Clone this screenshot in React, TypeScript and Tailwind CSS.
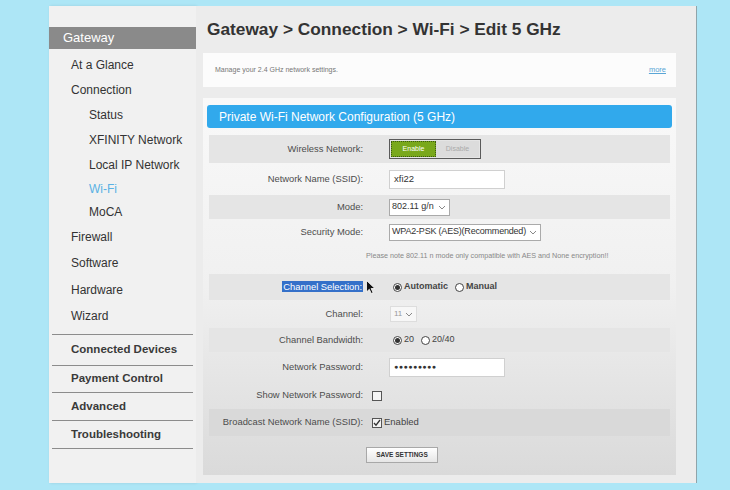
import React from 'react';

const sans = "font-['Liberation_Sans',Arial,sans-serif]";

const Chevron = () => (
  <svg width="8" height="5" viewBox="0 0 8 5" className="ml-auto mr-[3px] shrink-0">
    <path d="M1 1l3 3 3-3" fill="none" stroke="#888" strokeWidth="1" />
  </svg>
);

const Radio = ({ on }: { on?: boolean }) => (
  <span className="inline-flex h-[9px] w-[9px] items-center justify-center rounded-full border border-[#444] bg-white">
    {on && <span className="h-[5px] w-[5px] rounded-full bg-[#333]" />}
  </span>
);

const Check = ({ on }: { on?: boolean }) => (
  <span className="inline-flex h-[10px] w-[10px] items-center justify-center border border-[#555] bg-[#f4f4f4]">
    {on && (
      <svg width="8" height="8" viewBox="0 0 8 8">
        <path d="M1 4l2 2.2L7 1" fill="none" stroke="#333" strokeWidth="1.3" />
      </svg>
    )}
  </span>
);

const Label = ({ children }: { children: React.ReactNode }) => (
  <div className="w-[154px] shrink-0 text-right text-[9.4px] text-[#4d4d4d]">{children}</div>
);

const Cursor = () => (
  <svg width="9" height="14" viewBox="0 0 9 14" className="ml-[3px] shrink-0">
    <path d="M0.5 0.5v11.5l2.8-2.7 2 4.2 1.8-0.9-2-4.1h3.8z" fill="#111" stroke="#fff" strokeWidth="0.8" />
  </svg>
);

const App = () => {
  const navTop = [
    { t: 'At a Glance', h: 'h-[25px]', sub: false },
    { t: 'Connection', h: 'h-[25px]', sub: false },
    { t: 'Status', h: 'h-[25px]', sub: true },
    { t: 'XFINITY Network', h: 'h-[25px]', sub: true },
    { t: 'Local IP Network', h: 'h-[25px]', sub: true },
    { t: 'Wi-Fi', h: 'h-[23px]', sub: true, active: true },
    { t: 'MoCA', h: 'h-[24px]', sub: true },
    { t: 'Firewall', h: 'h-[25px]', sub: false },
    { t: 'Software', h: 'h-[27px]', sub: false },
    { t: 'Hardware', h: 'h-[27px]', sub: false },
    { t: 'Wizard', h: 'h-[26px]', sub: false },
  ];
  const navBold = [
    { t: 'Connected Devices', h: 'h-[31px]' },
    { t: 'Payment Control', h: 'h-[27px]' },
    { t: 'Advanced', h: 'h-[28px]' },
    { t: 'Troubleshooting', h: 'h-[28px]' },
  ];

  return (
    <div className={`min-h-[490px] w-[730px] bg-[#ade6f6] pl-[49px] pt-[6px] ${sans}`}>
      <div className="flex h-[477px] w-[648px]">
        {/* sidebar */}
        <aside className="w-[147px] shrink-0 bg-[#f1f1f1] pt-[21px] shadow-[1px_0_3px_rgba(0,0,0,0.1)]">
          <div className="flex h-[22px] items-center bg-[#8a8a8a] pl-[14px] text-[13px] text-white">Gateway</div>
          <div className="mt-[3px]">
            {navTop.map((n) => (
              <div
                key={n.t}
                className={`flex items-center ${n.h} ${n.sub ? 'pl-[40px]' : 'pl-[22px]'} text-[12px] ${
                  n.active ? 'text-[#5ab2e4]' : 'text-[#333]'
                }`}
              >
                {n.t}
              </div>
            ))}
          </div>
          <div className="mx-[3px] mt-[5px] border-t border-[#8c8c8c]">
            {navBold.map((n) => (
              <div
                key={n.t}
                className={`flex items-center ${n.h} border-b border-[#8c8c8c] pl-[19px] text-[11.5px] font-bold text-[#3a3a3a]`}
              >
                {n.t}
              </div>
            ))}
          </div>
        </aside>

        {/* content */}
        <main className="flex flex-1 flex-col border-r border-[#8fa4aa] bg-[#ececec] pl-[7px] pr-[20px]">
          <h1 className="mt-[13px] h-[20px] pl-[4px] text-[17.3px] font-bold leading-[20px] text-[#333]">
            Gateway &gt; Connection &gt; Wi-Fi &gt; Edit 5 GHz
          </h1>
          <div className="mt-[14px] flex h-[34px] items-center justify-between bg-[#fcfcfc] pl-[12px] pr-[10px] text-[7px]">
            <span className="text-[#777]">Manage your 2.4 GHz network settings.</span>
            <span className="text-[7.5px] text-[#5aa6d6] underline">more</span>
          </div>

          <section className="mt-[11px] h-[377px] bg-gradient-to-b from-[#f9f9f9] via-[#f0f0f0] to-[#dadada] px-[4px] pt-[7px]">
            <div className="flex h-[23px] items-center rounded-[3px] bg-[#31a9ec] pl-[12px] text-[12px] text-white">
              Private Wi-Fi Network Configuration (5 GHz)
            </div>

            <div className="mt-[7px] px-[2px]">
              <div className="flex h-[28px] items-center bg-[#e5e5e5]">
                <Label>Wireless Network:</Label>
                <div className="ml-[26px] flex h-[20px] border border-[#5a5a5a] p-[1px]">
                  <span className="flex w-[45px] items-center justify-center border border-dotted border-[#3d5a10] bg-[#79a81c] text-[7px] text-white">
                    Enable
                  </span>
                  <span className="flex w-[43px] items-center justify-center bg-[#dcdcdc] text-[7px] text-[#aaa]">
                    Disable
                  </span>
                </div>
              </div>

              <div className="flex h-[32px] items-center">
                <Label>Network Name (SSID):</Label>
                <div className="ml-[26px] flex h-[19px] w-[116px] items-center border border-[#d0d0d0] bg-white pl-[4px] text-[9.5px] text-[#333]">
                  xfi22
                </div>
              </div>

              <div className="flex h-[24px] items-center bg-[#e5e5e5]">
                <Label>Mode:</Label>
                <div className="ml-[26px] flex h-[17px] w-[61px] items-center border border-[#aaa] bg-white pl-[2px] text-[9px] text-[#333]">
                  802.11 g/n
                  <Chevron />
                </div>
              </div>

              <div className="flex h-[26px] items-center">
                <Label>Security Mode:</Label>
                <div className="ml-[26px] flex h-[17px] w-[152px] items-center border border-[#aaa] bg-white pl-[2px] text-[9px] tracking-[-0.2px] text-[#333]">
                  WPA2-PSK (AES)(Recommended)
                  <Chevron />
                </div>
              </div>

              <div className="h-[29px] pl-[157px] pt-[6px] text-[7.2px] text-[#888]">
                Please note 802.11 n mode only compatible with AES and None encryption!!
              </div>

              <div className="flex h-[26px] items-center bg-[#e5e5e5]">
                <div className="w-[154px] shrink-0 text-right text-[9.4px]">
                  <span className="bg-[#3470c9] px-[1px] text-white">Channel Selection:</span>
                </div>
                <Cursor />
                <div className="ml-[18px] flex items-center gap-[2px] text-[9px] font-semibold text-[#444]">
                  <Radio on />
                  <span>Automatic</span>
                  <span className="ml-[3px]" />
                  <Radio />
                  <span>Manual</span>
                </div>
              </div>

              <div className="flex h-[28px] items-center">
                <Label>Channel:</Label>
                <div className="ml-[27px] flex h-[16px] w-[27px] items-center border border-[#ddd] bg-[#f7f7f7] pl-[3px] text-[8px] text-[#999]">
                  11
                  <Chevron />
                </div>
              </div>

              <div className="flex h-[24px] items-center bg-[#e5e5e5]">
                <Label>Channel Bandwidth:</Label>
                <div className="ml-[30px] flex items-center gap-[2px] text-[9px] text-[#444]">
                  <Radio on />
                  <span>20</span>
                  <span className="ml-[3px]" />
                  <Radio />
                  <span>20/40</span>
                </div>
              </div>

              <div className="flex h-[30px] items-center">
                <Label>Network Password:</Label>
                <div className="ml-[26px] flex h-[19px] w-[116px] items-center border border-[#d0d0d0] bg-white pl-[4px] text-[7px] tracking-[0.5px] text-[#333]">
                  ●●●●●●●●●
                </div>
              </div>

              <div className="flex h-[27px] items-center">
                <Label>Show Network Password:</Label>
                <div className="ml-[9px]">
                  <Check />
                </div>
              </div>

              <div className="flex h-[27px] items-center bg-[#d9d9d9]">
                <Label>Broadcast Network Name (SSID):</Label>
                <div className="ml-[9px] flex items-center gap-[2px] text-[9.5px] text-[#444]">
                  <Check on />
                  <span>Enabled</span>
                </div>
              </div>

              <div className="pl-[157px] pt-[11px]">
                <button className="flex h-[16px] w-[72px] items-center justify-center border border-[#a8a8a8] bg-gradient-to-b from-white to-[#e6e6e6] text-[6.5px] font-bold text-[#333]">
                  SAVE SETTINGS
                </button>
              </div>
            </div>
          </section>
        </main>
      </div>
    </div>
  );
};

export default App;
